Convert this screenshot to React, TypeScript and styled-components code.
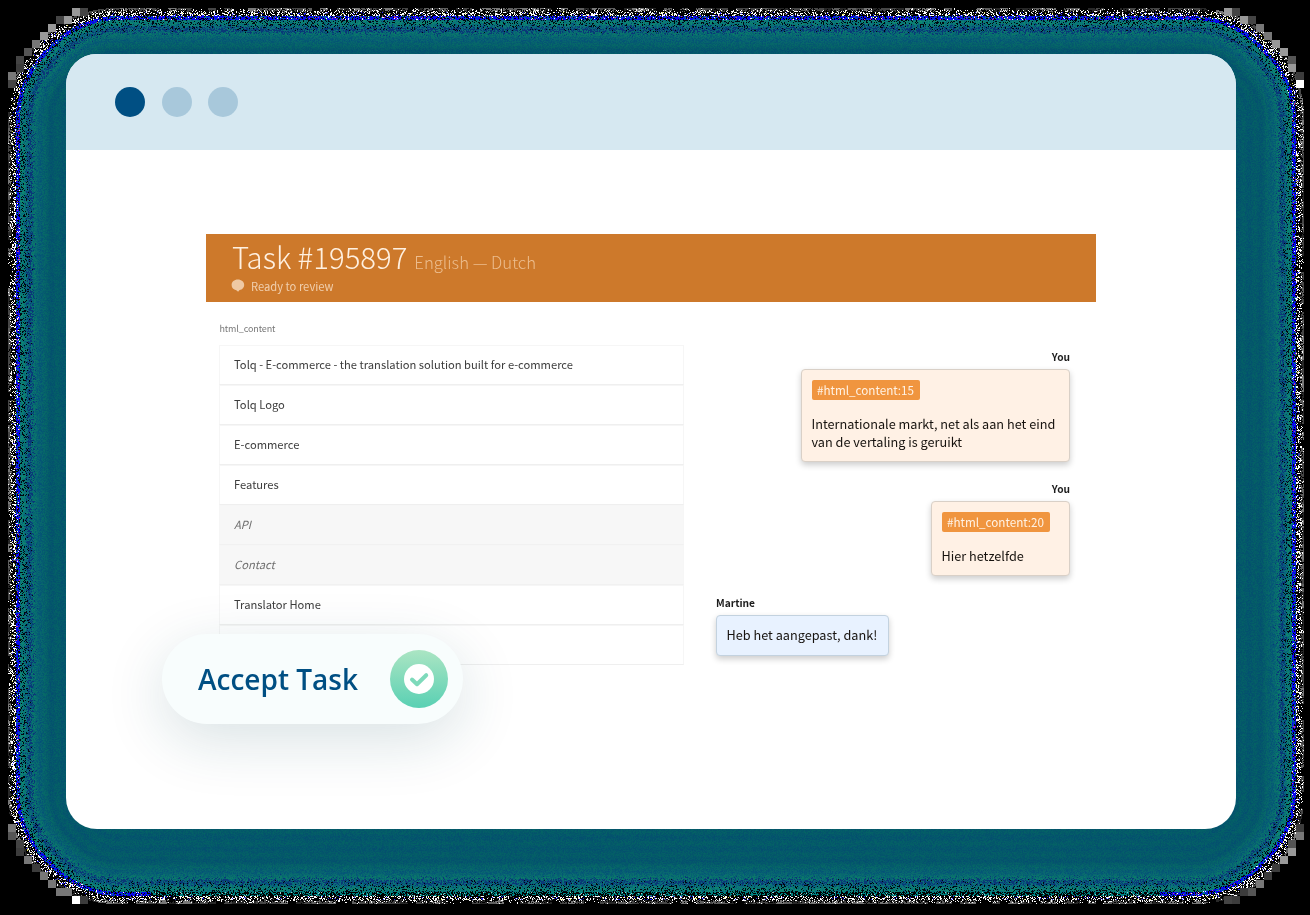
import React, { useEffect, useRef } from "react";
import styled, { createGlobalStyle, css } from "styled-components";

const GlobalStyle = createGlobalStyle`
  * { box-sizing: border-box; }
  body {
    margin: 0;
    background: #000;
    overflow: hidden;
    font-family: "Noto Sans CJK SC", "Noto Sans", sans-serif;
  }
`;

const WIDTH = 1310;
const HEIGHT = 915;

const Stage = styled.main`
  position: relative;
  width: ${WIDTH}px;
  height: ${HEIGHT}px;
  padding: 54px 74px 0 66px;
  overflow: hidden;
`;

const Halo = styled.canvas`
  position: absolute;
  inset: 0;
`;

const Window = styled.section`
  position: relative;
  height: 774.5px;
  border-radius: 31px;
  overflow: hidden;
  background: #fff;
`;

const TitleBar = styled.header`
  display: flex;
  align-items: center;
  gap: 16.3px;
  height: 96px;
  padding-left: 49.4px;
  background: #d6e8f1;
`;

const Dot = styled.span<{ $active?: boolean }>`
  width: 30px;
  height: 30px;
  border-radius: 50%;
  background: ${(p) => (p.$active ? "#004f83" : "#a8c8db")};
`;

const Page = styled.div`
  width: 890px;
  margin: 84px 0 0 140px;
`;

const TaskHeader = styled.div`
  height: 68px;
  padding: 2px 26px 0;
  background: #cd792b;
  color: #fff0e0;
`;

const TaskTitle = styled.h1`
  display: flex;
  align-items: baseline;
  gap: 7px;
  margin: 0;
  height: 42px;
  line-height: 40px;
  font-size: 29.3px;
  font-weight: 300;
  white-space: nowrap;
`;

const Languages = styled.span`
  font-size: 16.7px;
  color: #ecbd8e;
`;

const Status = styled.div`
  display: flex;
  align-items: center;
  gap: 7px;
  height: 16px;
  line-height: 16px;
  font-size: 11.2px;
  color: #f0cfae;
`;

const Columns = styled.div`
  display: flex;
  justify-content: space-between;
  padding: 17px 26px 0 13px;
`;

const Strings = styled.div`
  width: 465px;
`;

const GroupLabel = styled.div`
  height: 26px;
  padding-left: 0.5px;
  line-height: 19px;
  font-size: 9px;
  letter-spacing: -0.12px;
  color: #777;
`;

const Row = styled.div<{ $muted?: boolean }>`
  height: 40px;
  padding-left: 14px;
  line-height: 37px;
  font-size: 11.18px;
  color: #3c3c3c;
  border: 1px solid #f6f6f6;
  border-bottom-color: #efefef;
  background: #fff;
  ${(p) =>
    p.$muted &&
    css`
      background: #f7f7f7;
      border-bottom-color: #f1f1f1;
      color: #6f6f6f;
      font-style: italic;
    `}
`;

const Chat = styled.div`
  display: flex;
  flex-direction: column;
  gap: 17.2px;
  width: 354px;
  padding-top: 28px;
`;

const Message = styled.div<{ $mine?: boolean }>`
  display: flex;
  flex-direction: column;
  align-items: ${(p) => (p.$mine ? "flex-end" : "flex-start")};
`;

const Author = styled.div`
  height: 22px;
  line-height: 20px;
  font-size: 10.2px;
  font-weight: 700;
  color: #1c1c1c;
`;

const Bubble = styled.div<{ $mine?: boolean; $w: number; $h: number }>`
  width: ${(p) => p.$w}px;
  height: ${(p) => p.$h}px;
  padding: 10px 9.5px;
  border: 1px solid ${(p) => (p.$mine ? "#d9d0c7" : "#c3d2df")};
  border-radius: 4px;
  background: ${(p) => (p.$mine ? "#fff1e5" : "#e8f2ff")};
  box-shadow: 0 3px 6px rgba(0, 0, 0, 0.2);
  font-size: 12.7px;
  line-height: 18px;
  color: #16120e;
  white-space: nowrap;
`;

const Reference = styled.span`
  display: block;
  width: 108px;
  height: 20px;
  margin-bottom: 15px;
  border-radius: 2px;
  background: #f0953f;
  color: #fff3e6;
  font-size: 11.7px;
  line-height: 20px;
  text-align: center;
`;

const AcceptButton = styled.button`
  position: absolute;
  left: 96px;
  top: 580px;
  display: flex;
  align-items: center;
  justify-content: space-between;
  width: 301px;
  height: 90px;
  padding: 0 15px 0 36px;
  border: 0;
  border-radius: 45px;
  background: #f8fdfd;
  box-shadow: 0 16px 60px rgba(20, 75, 90, 0.16);
  color: #004f83;
  font: 600 28px "Open Sans", "Noto Sans", sans-serif;
`;

type Rgb = [number, number, number];

/** Paints the dithered glow that surrounds the window. */
function paintHalo(ctx: CanvasRenderingContext2D) {
  const image = ctx.createImageData(WIDTH, HEIGHT);
  let seed = 1234567;
  const random = () => {
    seed = (seed * 1664525 + 1013904223) >>> 0;
    return seed / 4294967296;
  };
  const left = 8;
  const top = 8;
  const right = 1304;
  const bottom = 904;
  const radius = 108;
  const depth = (x: number, y: number) => {
    const qx = Math.max(left + radius - x, x - right + radius);
    const qy = Math.max(top + radius - y, y - bottom + radius);
    if (qx > 0 && qy > 0) return radius - Math.hypot(qx, qy);
    return radius - Math.max(qx, qy);
  };
  const shades = [0, 40, 70, 70, 95, 120];
  const columns = Math.ceil(WIDTH / 8);
  const blocks = Array.from(
    { length: columns * Math.ceil(HEIGHT / 8) },
    () => shades[Math.floor(random() * shades.length)],
  );
  for (let y = 0; y < HEIGHT; y++) {
    for (let x = 0; x < WIDTH; x++) {
      const d = depth(x + 0.5, y + 0.5);
      const n = random();
      const m = random();
      const underside = y > 850 && x > 150 && x < 1160;
      const qx = Math.max(left + radius - x, x - right + radius);
      const qy = Math.max(top + radius - y, y - bottom + radius);
      const diagonal = qx > 0 && qy > 0 ? Math.min(qx, qy) / Math.max(qx, qy) : 0;
      const edge = 8 + diagonal * 4;
      let c: Rgb = [0, 0, 0];
      if (d >= 0 && d < 4) {
        const g = blocks[Math.floor(y / 8) * columns + Math.floor(x / 8)];
        c = [g, g, g];
        if (n < d * 0.06) c = [255, 255, 255];
        else if (n > 1 - d * 0.15) c = [0, 0, 0];
      } else if (d >= 4 && d < edge) {
        if (n < 0.28) c = [255, 255, 255];
        else if (n < 0.34) c = [90, 90, 90];
        else if (n > 0.96) c = [40, 40, 255];
        else if (n > 0.945) c = [240, 240, 90];
      } else if (d >= edge && d < edge + 4) {
        if (underside) {
          if (n < 0.4) c = [0, 130, 130];
          else if (n < 0.44) c = [150, 200, 200];
        } else if (n < 0.55) c = [8, 8, 240];
        else if (n < 0.7) c = [0, 125, 135];
        else if (n < 0.73) c = [200, 60, 150];
        else if (n < 0.77) c = [255, 255, 255];
      } else if (d >= edge + 4) {
        const k = d - edge - 4;
        const t = Math.min(1, k / 30);
        const black = 0.28 * Math.max(0, 1 - k / 13);
        const navy = Math.exp(-Math.pow((k - 10) / 3.5, 2)) * 0.5;
        if (n < black) c = [0, 8, 16];
        else if (n < black + navy) c = [10, 56, 120];
        else {
          const j = (m - 0.5) * (44 - 28 * t);
          const band = Math.sin(k * 0.55) * 7 * (1 - t * 0.6);
          c = [
            4 + 14 * (1 - t) * m,
            118 - 30 * t + j + band,
            122 - 16 * t - j * 0.4 - band * 0.7,
          ];
        }
      }
      const i = (y * WIDTH + x) * 4;
      image.data[i] = c[0];
      image.data[i + 1] = c[1];
      image.data[i + 2] = c[2];
      image.data[i + 3] = 255;
    }
  }
  ctx.putImageData(image, 0, 0);
  const greys = ["#3c3c3c", "#555", "#777", "#444", "#999", "#fff"];
  for (let by = 8; by < 904; by += 8) {
    for (let bx = 8; bx < 1304; bx += 8) {
      const d = depth(bx + 4, by + 4);
      if (d < 1 && d > -5) {
        ctx.fillStyle = greys[Math.floor(random() * greys.length)];
        ctx.fillRect(bx, by, 8, 8);
      }
    }
  }
}

function Glow() {
  const ref = useRef<HTMLCanvasElement>(null);
  useEffect(() => {
    const ctx = ref.current?.getContext("2d");
    if (ctx) paintHalo(ctx);
  }, []);
  return <Halo ref={ref} width={WIDTH} height={HEIGHT} aria-hidden />;
}

const SpeechIcon = () => (
  <svg width="12" height="13" viewBox="0 0 12 13" fill="#efc9a3" overflow="visible">
    <path d="M5.800 -.4C2.300 -.4-.4 2-.4 5c0 2.700 2 4.700 4.700 5.200L6.100 11.800l1.500-1.700C10.400 9.600 12.200 7.600 12.200 5 12.200 2 9.400-.4 5.800-.4Z" />
  </svg>
);

const CheckBadge = () => (
  <svg width="58" height="58" viewBox="0 0 58 58">
    <defs>
      <linearGradient id="mint" x1="0" y1="0" x2="0" y2="1">
        <stop offset="0" stopColor="#abe5c3" />
        <stop offset="1" stopColor="#59d0b3" />
      </linearGradient>
    </defs>
    <circle cx="29" cy="29" r="29" fill="url(#mint)" />
    <circle cx="29" cy="29" r="15" fill="#fff" />
    <path
      d="M22 29.500l5 4.700 9.200-9"
      fill="none"
      stroke="#7edabb"
      strokeWidth="4"
      strokeLinecap="round"
      strokeLinejoin="round"
    />
  </svg>
);

const rows = [
  { text: "Tolq - E-commerce - the translation solution built for e-commerce" },
  { text: "Tolq Logo" },
  { text: "E-commerce" },
  { text: "Features" },
  { text: "API", muted: true },
  { text: "Contact", muted: true },
  { text: "Translator Home" },
  { text: "" },
];

export default function App() {
  return (
    <Stage>
      <GlobalStyle />
      <Glow />
      <Window>
        <TitleBar>
          <Dot $active />
          <Dot />
          <Dot />
        </TitleBar>
        <Page>
          <TaskHeader>
            <TaskTitle>
              <span>Task #195897</span>
              <Languages>English — Dutch</Languages>
            </TaskTitle>
            <Status>
              <SpeechIcon />
              <span>Ready to review</span>
            </Status>
          </TaskHeader>
          <Columns>
            <Strings>
              <GroupLabel>html_content</GroupLabel>
              {rows.map((row, i) => (
                <Row key={i} $muted={row.muted}>
                  {row.text}
                </Row>
              ))}
            </Strings>
            <Chat>
              <Message $mine>
                <Author>You</Author>
                <Bubble $mine $w={269} $h={93}>
                  <Reference>#html_content:15</Reference>
                  Internationale markt, net als aan het eind
                  <br />
                  van de vertaling is geruikt
                </Bubble>
              </Message>
              <Message $mine>
                <Author>You</Author>
                <Bubble $mine $w={139} $h={75}>
                  <Reference>#html_content:20</Reference>
                  Hier hetzelfde
                </Bubble>
              </Message>
              <Message>
                <Author>Martine</Author>
                <Bubble $w={172.5} $h={41}>
                  Heb het aangepast, dank!
                </Bubble>
              </Message>
            </Chat>
          </Columns>
        </Page>
        <AcceptButton>
          <span>Accept Task</span>
          <CheckBadge />
        </AcceptButton>
      </Window>
    </Stage>
  );
}
